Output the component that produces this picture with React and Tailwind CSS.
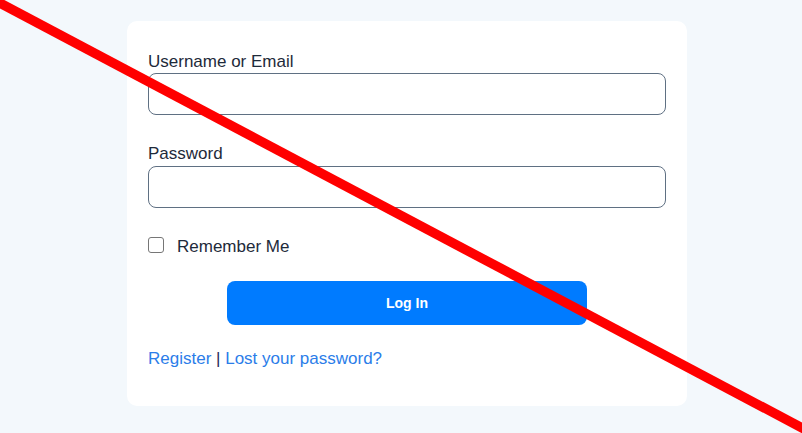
import React from 'react';

const App = () => {
    return (
        <div className="relative w-[802px] h-[433px] overflow-hidden bg-[#f3f8fc] font-['Liberation_Sans',Arial,sans-serif]">
            <div className="pl-[127px] pt-[21px]">
                <div className="w-[560px] h-[385px] bg-white rounded-[10px] px-[21px] pt-[29px]">
                    {/* Username */}
                    <label className="block text-[17px] leading-[23px] text-[#1e2a3a]">Username or Email</label>
                    <div className="h-[42px] border border-[#5f7083] rounded-[8px]"></div>

                    {/* Password */}
                    <label className="block mt-[27px] text-[17px] leading-[24px] text-[#1e2a3a]">Password</label>
                    <div className="h-[42px] border border-[#5f7083] rounded-[8px]"></div>

                    {/* Remember */}
                    <div className="flex items-center mt-[25px] h-[24px]">
                        <div className="w-[16px] h-[16px] border border-[#767676] rounded-[3px] bg-white"></div>
                        <span className="ml-[13px] pt-[3px] text-[17px] leading-[24px] text-[#1e2a3a]">Remember Me</span>
                    </div>

                    {/* Button */}
                    <div className="flex justify-center mt-[24px]">
                        <button className="w-[360px] h-[44px] bg-[#007bff] rounded-[8px] text-white text-[14px] font-bold">Log In</button>
                    </div>

                    {/* Links */}
                    <div className="mt-[22px] text-[17px] leading-[24px]">
                        <span className="text-[#2b7de9]">Register</span>
                        <span className="text-[#2a2a5a]"> | </span>
                        <span className="text-[#2b7de9]">Lost your password?</span>
                    </div>
                </div>
            </div>

            {/* red strike line over the page */}
            <svg className="absolute inset-0 pointer-events-none" width="802" height="433" viewBox="0 0 802 433">
                <line x1="-2" y1="2" x2="804" y2="429" stroke="#ff0000" strokeWidth="9.5" />
            </svg>
        </div>
    );
};

export default App;
